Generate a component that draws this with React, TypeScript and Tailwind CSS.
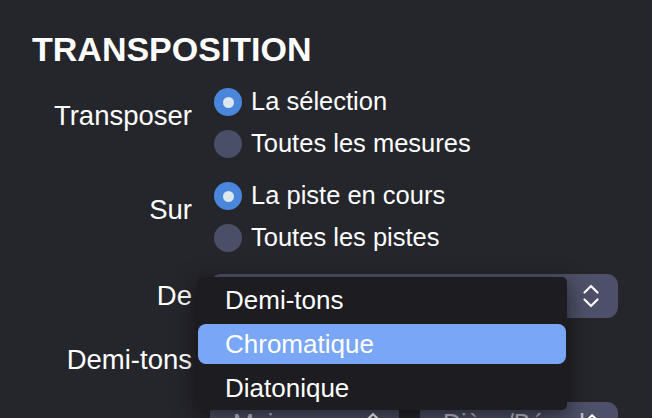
import React from "react";

function Chevrons({ className = "" }: { className?: string }) {
  return (
    <svg width="16" height="26" viewBox="0 0 16 26" className={className} fill="none" stroke="white" strokeWidth="2.2" strokeLinecap="round" strokeLinejoin="round">
      <path d="M1.5 9.5 L8 3 L14.5 9.5" />
      <path d="M1.5 16.5 L8 23 L14.5 16.5" />
    </svg>
  );
}

function Radio({ checked, label }: { checked: boolean; label: string }) {
  return (
    <div className="h-[42px] flex items-center gap-[9px] pl-[4px]">
      {checked ? (
        <span className="w-[28px] h-[28px] rounded-full bg-[#4a86db] flex items-center justify-center">
          <span className="w-[11px] h-[11px] rounded-full bg-[#dde7ee]" />
        </span>
      ) : (
        <span className="w-[28px] h-[28px] rounded-full bg-[#4b4e67]" />
      )}
      <span className="text-[25.5px] leading-none text-white">{label}</span>
    </div>
  );
}

export default function App() {
  return (
    <div className="relative w-[652px] h-[418px] overflow-hidden bg-[#25252c] text-white font-['Liberation_Sans',Arial,sans-serif]">
      <h1 className="pl-[32px] pt-[32px] text-[34px] leading-[34px] font-bold">TRANSPOSITION</h1>

      <div className="mt-[15px] grid grid-cols-[192px_1fr] gap-x-[18px]">
        <div className="text-right text-[27.5px] leading-[42px] pt-[14px]">Transposer</div>
        <div>
          <Radio checked label="La sélection" />
          <Radio checked={false} label="Toutes les mesures" />
        </div>

        <div className="mt-[10px] text-right text-[27.5px] leading-[42px] pt-[14px]">Sur</div>
        <div className="mt-[10px]">
          <Radio checked label="La piste en cours" />
          <Radio checked={false} label="Toutes les pistes" />
        </div>

        <div className="mt-[15px] text-right text-[27.5px] leading-[44px]">De</div>
        <div className="mt-[15px] w-[408px] h-[44px] rounded-[11px] bg-[#4d5068] flex items-center justify-end pl-[16px] pr-[19px]">
          <Chevrons />
        </div>

        <div className="mt-[20px] text-right text-[27.5px] leading-[44px]">Demi-tons</div>
        <div className="mt-[20px] w-[300px] h-[44px] rounded-[11px] bg-[#3b3d50]" />

        <div className="mt-[20px]" />
        <div className="mt-[20px] flex gap-[21px]">
          <div className="w-[189px] h-[44px] rounded-[11px] bg-[#4d5068] flex items-center justify-between pl-[23px] pr-[18px]">
            <span className="text-[25px] text-[#c4c6d2]">Majeur</span>
            <Chevrons />
          </div>
          <div className="w-[198px] h-[44px] rounded-[11px] bg-[#4d5068] flex items-center justify-between pl-[23px] pr-[19px]">
            <span className="text-[25px] text-[#c4c6d2]">Dièse/Bémol</span>
            <Chevrons />
          </div>
        </div>
      </div>

      <div className="absolute left-[197px] top-[277px] w-[370px] h-[133px] rounded-[5px] bg-[#1c1c21] shadow-[0_6px_22px_rgba(0,0,0,0.55)] pt-[1px]">
        <div className="h-[44px] flex items-center pl-[28px] text-[26px] leading-none">Demi-tons</div>
        <div className="h-[44px] py-[2px] px-[1px]">
          <div className="h-full rounded-[8px] bg-[#79a6f6] flex items-center pl-[27px] text-[26px] leading-none">Chromatique</div>
        </div>
        <div className="h-[44px] flex items-center pl-[28px] text-[26px] leading-none">Diatonique</div>
      </div>
    </div>
  );
}
